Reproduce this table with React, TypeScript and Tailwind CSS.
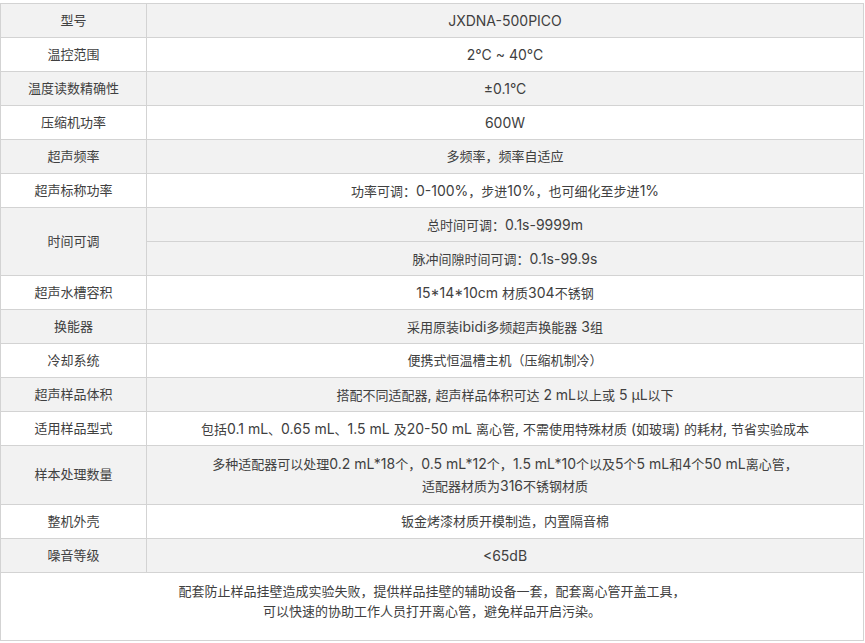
const rows: { label: string; value: string[]; h?: string }[] = [
  { label: '型号', value: ['JXDNA-500PICO'] },
  { label: '温控范围', value: ['2°C ~ 40°C'] },
  { label: '温度读数精确性', value: ['±0.1°C'] },
  { label: '压缩机功率', value: ['600W'] },
  { label: '超声频率', value: ['多频率，频率自适应'] },
  { label: '超声标称功率', value: ['功率可调：0-100%，步进10%，也可细化至步进1%'] },
]

const rows2: { label: string; value: string[]; tall?: boolean }[] = [
  { label: '超声水槽容积', value: ['15*14*10cm 材质304不锈钢'] },
  { label: '换能器', value: ['采用原装ibidi多频超声换能器 3组'] },
  { label: '冷却系统', value: ['便携式恒温槽主机（压缩机制冷）'] },
  { label: '超声样品体积', value: ['搭配不同适配器, 超声样品体积可达 2 mL以上或 5 μL以下'] },
  { label: '适用样品型式', value: ['包括0.1 mL、0.65 mL、1.5 mL 及20-50 mL 离心管, 不需使用特殊材质 (如玻璃) 的耗材, 节省实验成本'] },
  {
    label: '样本处理数量',
    value: ['多种适配器可以处理0.2 mL*18个，0.5 mL*12个，1.5 mL*10个以及5个5 mL和4个50 mL离心管，', '适配器材质为316不锈钢材质'],
    tall: true,
  },
  { label: '整机外壳', value: ['钣金烤漆材质开模制造，内置隔音棉'] },
  { label: '噪音等级', value: ['<65dB'] },
]

const cell = 'border border-[#d3d3d3] text-center align-middle px-2'

// latin runs render a touch larger than the chinese ones in the original
function Mixed({ text }: { text: string }) {
  const parts = text.split(/([\u3000-\u303f\u4e00-\u9fff\uff00-\uffef]+)/).filter(Boolean)
  return (
    <>
      {parts.map((p, i) =>
        /[\u3000-\u303f\u4e00-\u9fff\uff00-\uffef]/.test(p) ? (
          <span key={i} className="text-[13px]">{p}</span>
        ) : (
          <span key={i} className="text-[14px]">{p}</span>
        ),
      )}
    </>
  )
}

export default function App() {
  let stripe = 0
  const bg = () => (stripe++ % 2 === 0 ? 'bg-[#f2f2f2]' : 'bg-white')

  return (
    <div className="bg-white w-[865px] h-[643px] pt-[3px] text-[13px] text-[#404040] font-['Inter','Noto_Sans_CJK_SC',sans-serif]">
      <table className="w-[864px] table-fixed border-collapse border border-[#d3d3d3]">
        <colgroup>
          <col className="w-[146px]" />
          <col />
        </colgroup>
        <tbody>
          {rows.map((r) => {
            const c = bg()
            return (
              <tr key={r.label} className={`h-[34px] ${c}`}>
                <td className={cell}>{r.label}</td>
                <td className={cell}><Mixed text={r.value[0]} /></td>
              </tr>
            )
          })}
          {(() => {
            const c = bg()
            return (
              <>
                <tr className={`h-[34px] ${c}`}>
                  <td className={cell} rowSpan={2}>时间可调</td>
                  <td className={cell}><Mixed text="总时间可调：0.1s-9999m" /></td>
                </tr>
                <tr className={`h-[34px] ${c}`}>
                  <td className={cell}><Mixed text="脉冲间隙时间可调：0.1s-99.9s" /></td>
                </tr>
              </>
            )
          })()}
          {rows2.map((r) => {
            const c = bg()
            return (
              <tr key={r.label} className={`${r.tall ? 'h-[59px]' : 'h-[34px]'} ${c}`}>
                <td className={cell}>{r.label}</td>
                <td className={`${cell} leading-[21px]`}>
                  {r.value.map((v) => (
                    <div key={v}><Mixed text={v} /></div>
                  ))}
                </td>
              </tr>
            )
          })}
          <tr className="h-[68px] bg-white">
            <td className={`${cell} leading-[20px] pb-[12px]`} colSpan={2}>
              <div>配套防止样品挂壁造成实验失败，提供样品挂壁的辅助设备一套，配套离心管开盖工具，</div>
              <div>可以快速的协助工作人员打开离心管，避免样品开启污染。</div>
            </td>
          </tr>
        </tbody>
      </table>
    </div>
  )
}
